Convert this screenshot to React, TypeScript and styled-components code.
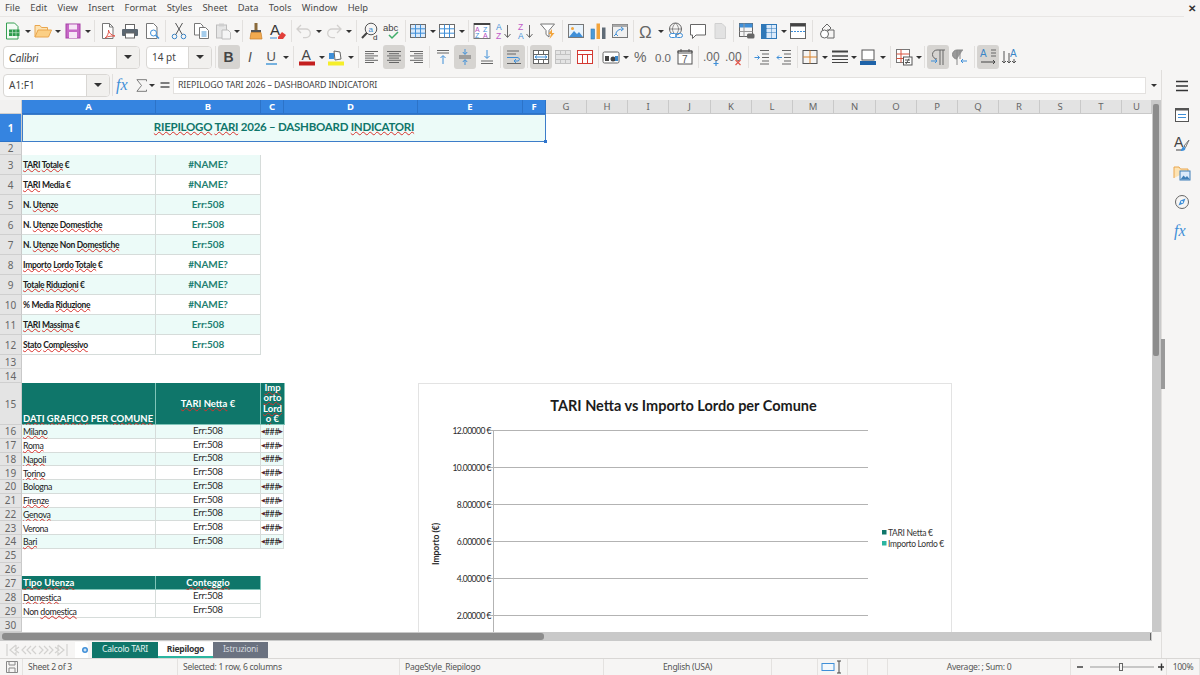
import React from "react";
import styled, { createGlobalStyle } from "styled-components";

const TEAL = "#0f766a";
const MINT = "#ecfbf8";
const BLUE = "#3584e0";
const LINE = "#d6dcda";
const UI = `"Noto Sans", "Open Sans", sans-serif`;
const SHEET = `Lato, "Liberation Sans", sans-serif`;

const COL_A = 134;
const COL_B = 105;
const COL_C = 23;

const Global = createGlobalStyle`
  html, body { margin: 0; padding: 0; background: #f6f5f4; }
  * { box-sizing: border-box; }
`;

const Page = styled.div`
  width: 1200px;
  height: 675px;
  overflow: hidden;
  display: flex;
  flex-direction: column;
  background: #f6f5f4;
  font-family: ${UI};
  color: #3d3d3d;
`;

const MenuRow = styled.div`
  height: 17px;
  display: flex;
`;

const MenuItems = styled.div`
  width: 1184px;
  display: flex;
  gap: 10.3px;
  padding-left: 5px;
  border-bottom: 1px solid #e8e6e4;
  font-size: 9.4px;
  line-height: 16px;
  color: #4a4a4a;
`;

const CloseDoc = styled.div`
  flex: 1;
  text-align: center;
  font-size: 10px;
  font-weight: 700;
  line-height: 16px;
  color: #333;
`;

const Bar = styled.div<{ $h: number; $pb?: number }>`
  height: ${(p) => p.$h}px;
  display: flex;
  align-items: center;
  padding-left: 2px;
  padding-bottom: ${(p) => p.$pb ?? 0}px;
`;

const Tool = styled.div<{ $on?: boolean; $w?: number }>`
  flex: none;
  width: ${(p) => p.$w ?? 22}px;
  height: 24px;
  display: flex;
  align-items: center;
  justify-content: center;
  border-radius: 3px;
  background: ${(p) => (p.$on ? "#d6d4d1" : "transparent")};
`;

const Drop = styled.div<{ $w?: number }>`
  flex: none;
  width: ${(p) => p.$w ?? 8}px;
  display: flex;
  justify-content: center;
  &::after {
    content: "";
    border: 3px solid transparent;
    border-top: 3.5px solid #333;
    border-bottom: 0;
  }
`;

const Sep = styled.div<{ $w?: number }>`
  flex: none;
  width: ${(p) => p.$w ?? 5}px;
  height: 22px;
  display: flex;
  justify-content: center;
  &::after {
    content: "";
    width: 1px;
    background: #e2e0de;
  }
`;

const Combo = styled.div<{ $w: number; $ml?: number }>`
  flex: none;
  width: ${(p) => p.$w}px;
  height: 23px;
  margin-left: ${(p) => p.$ml ?? 0}px;
  display: flex;
  background: #fff;
  border: 1px solid #d9d7d4;
  border-radius: 4px;
  overflow: hidden;
`;

const ComboText = styled.div<{ $italic?: boolean }>`
  flex: 1;
  padding-left: 5px;
  font-size: ${(p) => (p.$italic ? 11 : 10)}px;
  line-height: 21px;
  color: #444;
  font-family: ${(p) => (p.$italic ? SHEET : UI)};
  font-style: ${(p) => (p.$italic ? "italic" : "normal")};
`;

const ComboArrow = styled.div`
  flex: none;
  width: 23px;
  display: flex;
  align-items: center;
  justify-content: center;
  background: #f1f0ee;
  border-left: 1px solid #d9d7d4;
  &::after {
    content: "";
    border: 4px solid transparent;
    border-top: 4px solid #333;
    border-bottom: 0;
  }
`;

const Workspace = styled.div`
  height: 588px;
  display: flex;
`;

const MainColumn = styled.div`
  width: 1161px;
  display: flex;
  flex-direction: column;
`;

const FormulaBar = styled.div`
  height: 30px;
  flex: none;
  display: flex;
  align-items: center;
  padding-left: 3px;
`;

const FormulaInput = styled.div`
  flex: 1;
  height: 17px;
  margin-left: -1px;
  padding-left: 4px;
  background: #fff;
  border: 1px solid #e3e1df;
  font-size: 8.8px;
  letter-spacing: -0.1px;
  line-height: 15px;
  color: #444;
`;

const SheetRow = styled.div`
  height: 532px;
  flex: none;
  display: flex;
`;

const SheetPane = styled.div`
  position: relative;
  width: 1152px;
  overflow: hidden;
  background: #fff;
`;

const HeadRow = styled.div`
  height: 14px;
  display: flex;
`;

const Corner = styled.div`
  width: 22px;
  background: #f2f1f0;
  border-right: 1px solid #cfcfcf;
  border-bottom: 1px solid #cfcfcf;
`;

const ColHead = styled.div<{ $w: number; $on?: boolean }>`
  flex: none;
  width: ${(p) => p.$w}px;
  text-align: center;
  font-size: 9.5px;
  line-height: 14px;
  font-weight: ${(p) => (p.$on ? 700 : 400)};
  color: ${(p) => (p.$on ? "#fff" : "#666")};
  background: ${(p) => (p.$on ? BLUE : "#e3e3e3")};
  border-right: 1px solid ${(p) => (p.$on ? "#2c73c8" : "#c9c9c9")};
  border-bottom: 1px solid ${(p) => (p.$on ? "#2c73c8" : "#c9c9c9")};
`;

const Row = styled.div<{ $h: number }>`
  height: ${(p) => p.$h}px;
  display: flex;
`;

const RowHead = styled.div<{ $on?: boolean }>`
  flex: none;
  width: 22px;
  display: flex;
  align-items: center;
  justify-content: center;
  font-size: 10px;
  font-weight: ${(p) => (p.$on ? 700 : 400)};
  color: ${(p) => (p.$on ? "#fff" : "#666")};
  background: ${(p) => (p.$on ? BLUE : "#e4e4e4")};
  border-right: 1px solid #c9c9c9;
  border-bottom: 1px solid ${(p) => (p.$on ? "#2c73c8" : "#cfcfcf")};
`;

const TitleCell = styled.div`
  position: relative;
  width: 524px;
  text-align: center;
  background: ${MINT};
  border: 1.5px solid #3d7dc9;
  border-top-width: 1px;
  font-family: ${SHEET};
  font-size: 11.5px;
  letter-spacing: -0.25px;
  font-weight: 700;
  line-height: 24px;
  color: ${TEAL};
  &::after {
    content: "";
    position: absolute;
    right: -2px;
    bottom: -2px;
    width: 3.5px;
    height: 3.5px;
    background: #2f74cc;
  }
`;

const Cell = styled.div<{ $w: number; $mint?: boolean; $head?: boolean; $center?: boolean }>`
  flex: none;
  width: ${(p) => p.$w}px;
  display: flex;
  align-items: center;
  justify-content: ${(p) => (p.$center ? "center" : "flex-start")};
  padding: 0 1px;
  white-space: nowrap;
  font-family: ${SHEET};
  color: ${(p) => (p.$head ? "#fff" : "#222")};
  background: ${(p) => (p.$head ? TEAL : p.$mint ? MINT : "#fff")};
  border-right: 1px solid ${LINE};
  border-bottom: 1px solid ${LINE};
`;

const KpiLabel = styled(Cell)`
  font-size: 8.5px;
  letter-spacing: -0.3px;
  font-weight: 700;
  color: #1b1b1b;
`;

const KpiValue = styled(Cell)`
  font-size: 10px;
  letter-spacing: -0.1px;
  font-weight: 700;
  color: #1f7f72;
  padding-bottom: 2px;
`;

const HeadCell = styled(Cell)<{ $low?: boolean }>`
  font-size: 9.5px;
  font-weight: 700;
  align-items: ${(p) => (p.$low ? "flex-end" : "center")};
  border-color: #7fc4b8;
`;

const WrapHead = styled(HeadCell)`
  white-space: normal;
  text-align: center;
  line-height: 10.3px;
  padding: 0;
`;

const Name = styled(Cell)`
  font-size: 8.8px;
  letter-spacing: -0.35px;
  padding-top: 1px;
`;

const Err = styled(Cell)`
  font-size: 9.5px;
  letter-spacing: -0.2px;
  padding-bottom: 2px;
  color: #2a2a2a;
`;

const Hash = styled(Cell)`
  font-size: 9px;
  padding: 0;
  letter-spacing: -0.4px;
  overflow: hidden;
`;

const Tri = styled.span`
  font-size: 4.5px;
  color: #5a2323;
`;

const Sp = styled.span`
  text-decoration: underline wavy #d8322c 1px;
  text-underline-offset: 0;
  text-decoration-skip-ink: none;
`;

const ChartFrame = styled.div`
  position: absolute;
  left: 418px;
  top: 283px;
  width: 534px;
  height: 300px;
  background: #fff;
  border: 1px solid #e3e3e3;
`;

const VScroll = styled.div`
  position: relative;
  width: 9px;
  background: #c9c9c9;
  padding: 4px 1px 0;
`;

const VThumb = styled.div`
  width: 6px;
  height: 252px;
  border-radius: 2px;
  background: #8c8c8c;
`;

const SideGrip = styled.div`
  position: absolute;
  left: 9px;
  top: 239px;
  width: 5px;
  height: 50px;
  z-index: 2;
  background: #9a9a9a;
  border: solid #f6f5f4;
  border-width: 0 1px 0 0;
`;

const HScroll = styled.div`
  height: 9px;
  flex: none;
  width: 1152px;
  background: #c9c9c9;
  padding: 1px 0 1px 2px;
  display: flex;
  justify-content: space-between;
`;

const HThumb = styled.div`
  width: 542px;
  border-radius: 3px;
  background: #8c8c8c;
`;

const HEnd = styled.div`
  width: 1px;
  margin-right: 1px;
  background: #666;
`;

const TabRow = styled.div`
  height: 17px;
  flex: none;
  display: flex;
  align-items: flex-start;
  padding-top: 1px;
`;

const TabNav = styled.div`
  width: 75px;
  height: 16px;
  padding-left: 6px;
  display: flex;
  align-items: center;
`;

const NewTab = styled.div`
  width: 17px;
  height: 16px;
  display: flex;
  align-items: center;
`;

const Tab = styled.div<{ $w: number; $kind: "teal" | "white" | "grey" }>`
  width: ${(p) => p.$w}px;
  height: 16px;
  text-align: center;
  font-size: 8.6px;
  letter-spacing: -0.3px;
  line-height: 15px;
  font-weight: ${(p) => (p.$kind === "white" ? 700 : 400)};
  color: ${(p) => (p.$kind === "white" ? "#333" : p.$kind === "teal" ? "#e4f3f0" : "#d4d8de")};
  background: ${(p) => (p.$kind === "white" ? "#fff" : p.$kind === "teal" ? TEAL : "#6b7280")};
  border-bottom: ${(p) => (p.$kind === "white" ? "2px solid #2bb5a0" : "0")};
`;

const Sidebar = styled.div`
  flex: 1;
  display: flex;
  flex-direction: column;
  align-items: center;
  padding: 1px 0 0 1px;
  border-left: 1px solid #e0dedc;
`;

const SideTool = styled.div`
  height: 29px;
  display: flex;
  align-items: center;
  justify-content: center;
`;

const Status = styled.div`
  height: 17px;
  display: flex;
  border-top: 1px solid #d9d7d5;
  font-size: 8.6px;
  letter-spacing: -0.3px;
  line-height: 16px;
  color: #555;
`;

const StatusCell = styled.div<{ $w: number; $center?: boolean }>`
  flex: none;
  width: ${(p) => p.$w}px;
  display: flex;
  align-items: center;
  justify-content: ${(p) => (p.$center ? "center" : "flex-start")};
  padding-left: ${(p) => (p.$center ? 0 : 5)}px;
  border-right: 1px solid #e4e2e0;
  white-space: nowrap;
`;

const Ic = ({ s = 18, children }: { s?: number; children: React.ReactNode }) => (
  <svg width={s} height={s} viewBox="0 0 18 18" fill="none" overflow="visible">
    {children}
  </svg>
);

const T = (p: { x: number; y: number; s: number; c: string; b?: boolean; i?: boolean; children: string }) => (
  <text
    x={p.x}
    y={p.y}
    fontSize={p.s}
    fill={p.c}
    fontWeight={p.b ? 700 : 400}
    fontStyle={p.i ? "italic" : "normal"}
    fontFamily="'Liberation Sans', sans-serif"
  >
    {p.children}
  </text>
);

const GridIcon = ({ fill = "#dbeafa", line = "#3f8fd8", frame = "#6b6b6b" }) => (
  <Ic>
    <rect x="1.5" y="2.5" width="15" height="13" fill={fill} stroke={frame} />
    <path d="M6.5 2.500v13M11.5 2.500v13M1.5 6.800h15M1.5 11.200h15" stroke={line} />
  </Ic>
);

const AlignIcon = ({ rows }: { rows: [number, number][] }) => (
  <Ic>
    {rows.map(([a, b], i) => (
      <path key={i} d={`M${a} ${3.5 + i * 2.2}H${b}`} stroke="#666" />
    ))}
  </Ic>
);

const Lines = ({ d, c = "#666", w = 1 }: { d: string; c?: string; w?: number }) => (
  <path d={d} stroke={c} strokeWidth={w} />
);

const icons = {
  newDoc: (
    <Ic>
      <path d="M2.5 1h8L14 4.500V17H2.500z" fill="#f3fbf4" stroke="#36a052" />
      <rect x="5" y="7.5" width="10.5" height="6.5" fill="#2e9a4c" />
      <path d="M8.500 7.500v6.500M12 7.500v6.500M5 10.700h10.500" stroke="#bfe6ca" strokeWidth=".7" />
    </Ic>
  ),
  open: (
    <Ic>
      <path d="M1 15V3.500h5l1.500 2h6V8" fill="#fde3b3" stroke="#eaa64e" />
      <path d="M1 15l3-7h13.500l-3 7z" fill="#fbcf85" stroke="#eaa64e" />
    </Ic>
  ),
  save: (
    <Ic>
      <rect x="2" y="2" width="14" height="14" fill="#c768c7" stroke="#a643a6" />
      <rect x="5" y="2.5" width="8" height="5" fill="#f6e5f6" />
      <rect x="5" y="10" width="8" height="6" fill="#f6e5f6" />
    </Ic>
  ),
  pdf: (
    <Ic>
      <path d="M3.500 1.500h7L14 5v11.500H3.500z" fill="#fff" stroke="#777" />
      <path d="M10.500 1.500V5H14" stroke="#777" />
      <path d="M6 16c2-1 4-5 3.500-8 .5 3 2.500 5 6.500 6-3 0-7 0-10 2z" stroke="#e2574c" />
    </Ic>
  ),
  print: (
    <Ic>
      <rect x="4.5" y="2.5" width="9" height="5" fill="#fff" stroke="#666" />
      <rect x="1" y="7" width="16" height="7" rx="1" fill="#5b6670" />
      <rect x="4.5" y="11" width="9" height="5" fill="#fff" stroke="#666" />
    </Ic>
  ),
  preview: (
    <Ic>
      <path d="M3.500 1.500h7L14 5v11.500H3.500z" fill="#fff" stroke="#777" />
      <circle cx="10.5" cy="11" r="3" stroke="#3f8fd8" />
      <path d="M12.700 13.200L16 16.500" stroke="#3f8fd8" strokeWidth="1.5" />
    </Ic>
  ),
  cut: (
    <Ic>
      <circle cx="4.5" cy="14.5" r="2.3" stroke="#3a86c8" />
      <circle cx="13.5" cy="14.5" r="2.3" stroke="#3a86c8" />
      <path d="M5.800 12.500L12.500 1M12.200 12.500L5.500 1" stroke="#555" />
    </Ic>
  ),
  copy: (
    <Ic>
      <path d="M2.500 1.500h6L11 4v9H2.500z" fill="#fff" stroke="#777" />
      <path d="M7.500 5.500h6l3 3v8h-9z" fill="#fff" stroke="#777" />
      <path d="M9.500 10h5M9.500 12h5M9.500 14h5" stroke="#4a9ad8" />
    </Ic>
  ),
  paste: (
    <Ic>
      <rect x="2.5" y="3" width="10" height="13" fill="#e6e6e6" stroke="#bdbdbd" />
      <rect x="5" y="1.5" width="5" height="3" fill="#cfcfcf" />
      <path d="M8 8h6l2.500 2.500V17H8z" fill="#f5f5f5" stroke="#bdbdbd" />
    </Ic>
  ),
  clone: (
    <Ic>
      <rect x="7.5" y="1" width="3" height="7" fill="#8a6a3a" />
      <rect x="4" y="8" width="10" height="2.5" fill="#555" />
      <path d="M4 10.500h10l1 6.500H3z" fill="#f2aa4f" stroke="#c9802a" strokeWidth=".7" />
    </Ic>
  ),
  clear: (
    <Ic>
      <T x={1} y={13} s={15} c="#333">A</T>
      <path d="M9 15l4-5 4 3-3 4H9z" fill="#e23f3a" />
      <path d="M1 16h7" stroke="#3f8fd8" />
    </Ic>
  ),
  undo: (
    <Ic>
      <path d="M6 3L2 7l4 4M2 7h9a4.300 4.300 0 010 8.600H8" stroke="#d2d0ce" strokeWidth="1.3" />
    </Ic>
  ),
  redo: (
    <Ic>
      <path d="M12 3l4 4-4 4M16 7H7a4.300 4.300 0 000 8.600h3" stroke="#d2d0ce" strokeWidth="1.3" />
    </Ic>
  ),
  find: (
    <Ic>
      <circle cx="10" cy="7" r="5.8" stroke="#555" />
      <T x={7.5} y={9.5} s={8} c="#3a86c8">a</T>
      <T x={12} y={17.5} s={8} c="#333">d</T>
      <path d="M5.800 11L1 16" stroke="#444" strokeWidth="2" />
    </Ic>
  ),
  spell: (
    <Ic>
      <T x={0} y={9} s={9.5} c="#444">abc</T>
      <path d="M6 13l3 3 6-6" stroke="#3fae6a" strokeWidth="1.5" />
    </Ic>
  ),
  sort: (
    <Ic>
      <rect x="1" y="1.5" width="16" height="15" fill="#fff" stroke="#777" />
      <rect x="1" y="1" width="16" height="2" fill="#444" />
      <T x={2} y={10} s={7} c="#b44fc0">A</T>
      <T x={2} y={16} s={7} c="#3f8fd8">Z</T>
      <T x={10} y={10} s={7} c="#3f8fd8">Z</T>
      <T x={10} y={16} s={7} c="#b44fc0">A</T>
    </Ic>
  ),
  asc: (
    <Ic>
      <T x={1} y={8} s={8.5} c="#3f8fd8">A</T>
      <T x={1} y={16.5} s={8.5} c="#c05cc8">Z</T>
      <path d="M12.500 3v12M9.500 12l3 3.500 3-3.500" stroke="#666" />
    </Ic>
  ),
  desc: (
    <Ic>
      <T x={1} y={8} s={8.5} c="#c05cc8">Z</T>
      <T x={1} y={16.5} s={8.5} c="#3f8fd8">A</T>
      <path d="M12.500 3v12M9.500 12l3 3.500 3-3.500" stroke="#666" />
    </Ic>
  ),
  filter: (
    <Ic>
      <path d="M1.500 2h14L10 8.500V15l-3-2.500v-4z" fill="#fff" stroke="#777" />
      <path d="M13 7l-3.500 5H12l-1.500 5 5-6H13z" fill="#f2a43c" />
    </Ic>
  ),
  image: (
    <Ic>
      <rect x="1.5" y="2.5" width="15" height="13" fill="#e8f3fc" stroke="#777" />
      <circle cx="5.5" cy="6.5" r="1.5" fill="#f2a43c" />
      <path d="M2 15l5-6 3 3 2-2 4 5z" fill="#3f8fd8" />
    </Ic>
  ),
  chart: (
    <Ic>
      <rect x="2" y="7" width="3.5" height="10" fill="#4a9ad8" stroke="#2f78b8" strokeWidth=".6" />
      <rect x="7.5" y="1.5" width="3.5" height="15.5" fill="#f2a43c" />
      <rect x="13" y="5.5" width="3.5" height="11.5" fill="#5f6b76" />
    </Ic>
  ),
  pivot: (
    <Ic>
      <rect x="1.5" y="2.5" width="15" height="13" fill="#f0f0f0" stroke="#777" />
      <rect x="1.5" y="2.5" width="15" height="2.5" fill="#aaa" />
      <path d="M5 12c0-3 3-5 7-5M10 5l2.500 2-2.500 2M7 14l-2-2-2 2" stroke="#3f8fd8" />
    </Ic>
  ),
  omega: (
    <Ic>
      <T x={2} y={15.5} s={17} c="#666">Ω</T>
    </Ic>
  ),
  link: (
    <Ic>
      <circle cx="8.5" cy="7" r="6" stroke="#666" />
      <path d="M2.500 7h12M8.500 1c-4 4-4 8 0 12M8.500 1c4 4 4 8 0 12" stroke="#666" strokeWidth=".7" />
      <rect x="2.5" y="11.5" width="7" height="4" rx="2" fill="#fff" stroke="#3f8fd8" />
      <rect x="8.5" y="11.5" width="7" height="4" rx="2" stroke="#3f8fd8" />
    </Ic>
  ),
  comment: (
    <Ic>
      <path d="M1.500 2.500h15V13H7l-3.500 3.500V13h-2z" fill="#fff" stroke="#666" />
    </Ic>
  ),
  header: (
    <Ic>
      <path d="M4 1.500h7L14.500 5v11.500H4z" fill="#e2e2e2" stroke="#d0d0d0" />
    </Ic>
  ),
  freeze: (
    <Ic>
      <rect x="1.5" y="1.5" width="13" height="13" fill="#f6f6f6" stroke="#666" />
      <rect x="1.5" y="1.5" width="13" height="4" fill="#3f8fd8" />
      <path d="M1.500 9.500h13M6 1.500v13" stroke="#999" />
      <rect x="9" y="11.5" width="7.5" height="5" rx="1.5" fill="#666" />
    </Ic>
  ),
  colsplit: (
    <Ic>
      <rect x="1.5" y="2.5" width="15" height="14" fill="#dbeafa" stroke="#2f78b8" />
      <rect x="1.5" y="2.5" width="5" height="14" fill="#2f78b8" />
      <path d="M6.500 6.500h10M6.500 10.500h10M11.500 2.500v14M1.500 6.500h5M1.500 10.500h5" stroke="#2f78b8" strokeDasharray="1 1" />
    </Ic>
  ),
  pagebreak: (
    <Ic>
      <rect x="1.5" y="1.5" width="15" height="15" fill="#fff" stroke="#666" />
      <rect x="1.5" y="1.5" width="15" height="3" fill="#444" />
      <path d="M2 9.500h14" stroke="#3f8fd8" strokeDasharray="2 1" />
    </Ic>
  ),
  shapes: (
    <Ic>
      <path d="M4 7l5-5 4 4-5 5z" stroke="#666" />
      <circle cx="6.5" cy="12" r="4" fill="#fff" stroke="#666" />
      <path d="M9 8h7v8H9" stroke="#666" />
    </Ic>
  ),
  bold: (
    <Ic>
      <T x={3.5} y={14} s={14} c="#444" b>B</T>
    </Ic>
  ),
  italic: (
    <Ic>
      <T x={6} y={14} s={14} c="#555" i>I</T>
    </Ic>
  ),
  underline: (
    <Ic>
      <T x={3.5} y={13} s={13} c="#555">U</T>
      <path d="M3 16h11" stroke="#4a9ad8" strokeWidth="1.5" />
    </Ic>
  ),
  fontColor: (
    <Ic>
      <T x={3.5} y={12} s={14} c="#444">A</T>
      <rect x="1" y="13.5" width="16" height="4" fill="#c41f1f" />
    </Ic>
  ),
  bgColor: (
    <Ic>
      <rect x="1" y="13.5" width="16" height="4" fill="#f5ee2a" />
      <path d="M2 5h5v6H2z" fill="#3f8fd8" />
      <path d="M7 3l6 1 1 7-6 1z" fill="#fff" stroke="#666" />
    </Ic>
  ),
  left: <AlignIcon rows={[[2, 15], [2, 11], [2, 15], [2, 11], [2, 15], [2, 11]]} />,
  center: <AlignIcon rows={[[2, 16], [4, 14], [2, 16], [4, 14], [2, 16], [4, 14]]} />,
  right: <AlignIcon rows={[[3, 16], [7, 16], [3, 16], [7, 16], [3, 16], [7, 16]]} />,
  top: (
    <Ic>
      <Lines d="M3 2.500h12M3 5h12" />
      <Lines d="M9 16V8M6.500 10L9 7.500l2.500 2.500" c="#3f8fd8" />
    </Ic>
  ),
  middle: (
    <Ic>
      <Lines d="M3 8h12M3 10h12" />
      <Lines d="M9 1v5M6.800 4L9 6.500 11.200 4M9 17v-5M6.800 14L9 11.500l2.200 2.500" c="#3f8fd8" />
    </Ic>
  ),
  bottom: (
    <Ic>
      <Lines d="M3 13h12M3 15.500h12" />
      <Lines d="M9 2v8M6.500 8L9 10.500 11.500 8" c="#3f8fd8" />
    </Ic>
  ),
  wrap: (
    <Ic>
      <Lines d="M2 3h12M2 6h9M2 15.500h14" />
      <Lines d="M2 9.500h10c3 0 3 3 1 3.500H9M11 11l-2 2 2 2" c="#3f8fd8" />
    </Ic>
  ),
  merge: (
    <Ic>
      <rect x="1.5" y="2.5" width="15" height="13" fill="#fff" stroke="#666" />
      <path d="M1.500 6.500h15M1.500 11.500h15M6.500 2.500v4M11.500 2.500v4M6.500 11.500v4M11.500 11.500v4" stroke="#666" />
      <path d="M3 9h12M5 7.500L3 9l2 1.500M13 7.500L15 9l-2 1.500" stroke="#3f8fd8" />
    </Ic>
  ),
  merged: (
    <Ic>
      <rect x="1.5" y="2.5" width="15" height="13" fill="#e4e4e4" stroke="#c2c2c2" />
      <path d="M1.500 6.500h15M1.500 11.500h15M6.500 2.500v4M11.500 2.500v4M6.500 11.500v4M11.500 11.500v4" stroke="#c2c2c2" />
    </Ic>
  ),
  split: (
    <Ic>
      <rect x="1.5" y="2.5" width="15" height="13" fill="#fff" stroke="#d43a33" />
      <path d="M1.500 6.500h15M6.500 6.500v9M11.500 6.500v9" stroke="#d43a33" />
    </Ic>
  ),
  currency: (
    <Ic>
      <rect x="1" y="4" width="16" height="11" rx="1.5" fill="#fff" stroke="#666" />
      <rect x="3" y="8" width="4" height="5" fill="#444" />
      <circle cx="11" cy="11" r="2.5" fill="#444" />
      <rect x="13" y="8" width="3" height="5" fill="#3a86c8" />
    </Ic>
  ),
  percent: (
    <Ic>
      <T x={2} y={14} s={14} c="#666">%</T>
    </Ic>
  ),
  number: (
    <Ic>
      <T x={1} y={14} s={11.5} c="#666">0.0</T>
    </Ic>
  ),
  date: (
    <Ic>
      <rect x="2" y="3" width="14" height="13" fill="#fff" stroke="#555" />
      <path d="M2 3h14v2H2zM5 1v3M13 1v3" stroke="#555" />
      <T x={6} y={14.5} s={10} c="#555">7</T>
    </Ic>
  ),
  addDec: (
    <Ic>
      <T x={0} y={13} s={12} c="#666">.00</T>
      <path d="M13 13v5M10.500 15.500h5" stroke="#3f8fd8" strokeWidth="1.2" />
    </Ic>
  ),
  delDec: (
    <Ic>
      <T x={0} y={13} s={12} c="#666">.00</T>
      <path d="M10.500 12l5 5M15.500 12l-5 5" stroke="#e2574c" strokeWidth="1.2" />
    </Ic>
  ),
  indent: (
    <Ic>
      <Lines d="M7 2.500h9M9 6h7M9 9.500h7M9 13h7M7 16h9" />
      <Lines d="M1.500 9.500h5M4.500 7.500l2 2-2 2" c="#3f8fd8" />
    </Ic>
  ),
  outdent: (
    <Ic>
      <Lines d="M7 2.500h9M9 6h7M9 9.500h7M9 13h7M7 16h9" />
      <Lines d="M7 9.500H2M4 7.500l-2 2 2 2" c="#3f8fd8" />
    </Ic>
  ),
  borders: (
    <Ic>
      <rect x="2" y="2.5" width="14" height="13" stroke="#555" />
      <path d="M9 2.500v13M2 9h14" stroke="#d9822b" />
    </Ic>
  ),
  borderStyle: (
    <Ic>
      <path d="M1 3.500h16" stroke="#444" strokeWidth="2" />
      <path d="M1 8h16" stroke="#444" strokeWidth="1.5" />
      <path d="M1 11.500h16M1 14.500h16" stroke="#444" />
    </Ic>
  ),
  borderColor: (
    <Ic>
      <rect x="3" y="2" width="12" height="10" fill="#fff" stroke="#555" />
      <rect x="1" y="13" width="16" height="4" fill="#1f63a8" />
    </Ic>
  ),
  conditional: (
    <Ic>
      <rect x="1.5" y="1.5" width="13" height="13" fill="#fff" stroke="#777" />
      <path d="M1.500 6h13M1.500 10.500h13M6 1.500v13" stroke="#d9533f" />
      <rect x="8.5" y="9" width="8.5" height="8" fill="#fff" stroke="#555" />
      <path d="M10 12h5M10 14.500h5M14 10.500l-3 5.500" stroke="#555" />
    </Ic>
  ),
  ltr: (
    <Ic>
      <path d="M8 11a4.500 4.500 0 010-9h8M11 2v15M14 2v15" stroke="#666" />
      <path d="M2 13h6M6 11l2 2-2 2" stroke="#3f8fd8" />
    </Ic>
  ),
  rtl: (
    <Ic>
      <path d="M6 11a4.500 4.500 0 010-9h6M6 2v15M9 2v9" stroke="#888" fill="#999" />
      <path d="M16 13h-6M12 11l-2 2 2 2" stroke="#3f8fd8" />
    </Ic>
  ),
  horizontal: (
    <Ic>
      <T x={1} y={9} s={10} c="#3a86c8">A</T>
      <path d="M12 2h5M12 5h5M12 8h5" stroke="#666" />
      <path d="M2 14h14M14 12l2 2-2 2" stroke="#444" />
    </Ic>
  ),
  vertical: (
    <Ic>
      <T x={9} y={9} s={10} c="#3a86c8">A</T>
      <path d="M3 3v12M1 13l2 2 2-2M8 5v10M6 13l2 2 2-2M13 11v4M11 13l2 2 2-2" stroke="#555" />
    </Ic>
  ),
};

const FxMark = ({ c = "#3f8fd8" }: { c?: string }) => (
  <Ic>
    <text x="1" y="14" fontSize="16" fontStyle="italic" fontFamily="'Liberation Serif', serif" fill={c}>
      fx
    </text>
  </Ic>
);

const side = {
  menu: (
    <Ic>
      <path d="M3 4.500h12M3 9h12M3 13.500h12" stroke="#333" strokeWidth="1.4" />
    </Ic>
  ),
  props: (
    <Ic>
      <rect x="2.5" y="2.5" width="13" height="13" fill="#fff" stroke="#555" />
      <rect x="2.5" y="2.5" width="13" height="2" fill="#555" />
      <path d="M5 8.500h8M5 11.500h8" stroke="#3f8fd8" />
    </Ic>
  ),
  styles: (
    <Ic>
      <T x={1} y={12} s={14} c="#444">A</T>
      <path d="M3 15h6" stroke="#444" />
      <path d="M16 5l-5 6 1.500 1.500z" stroke="#777" />
      <path d="M10.500 11.500c-2 1-2 4-3 4.500 3 .5 5-1 5-3z" fill="#3f8fd8" />
    </Ic>
  ),
  gallery: (
    <Ic>
      <path d="M1 14V3h5l1.500 2H15v2" fill="#fde3b3" stroke="#eaa64e" />
      <rect x="7" y="7" width="10" height="9" fill="#dbeafa" stroke="#3f7fb8" />
      <path d="M7.500 15.500l3-4 2 2 1.500-1.500 3 3.500z" fill="#3f7fb8" />
    </Ic>
  ),
  nav: (
    <Ic>
      <circle cx="9" cy="9" r="6.5" stroke="#666" />
      <path d="M12.500 5.500l-2 5-5 2 2-5z" fill="#3f8fd8" />
      <circle cx="9" cy="9" r="1" fill="#fff" />
    </Ic>
  ),
};

const columns = [
  ["A", COL_A], ["B", COL_B], ["C", COL_C], ["D", 134], ["E", 105], ["F", 23],
  ["G", 41], ["H", 41], ["I", 41], ["J", 42], ["K", 41], ["L", 41], ["M", 41],
  ["N", 42], ["O", 41], ["P", 41], ["Q", 41], ["R", 41], ["S", 41], ["T", 41], ["U", 30],
] as [string, number][];

const kpis: [React.ReactNode, string][] = [
  [<><Sp>TARI</Sp> <Sp>Totale</Sp> €</>, "#NAME?"],
  [<><Sp>TARI</Sp> Media €</>, "#NAME?"],
  [<>N. <Sp>Utenze</Sp></>, "Err:508"],
  [<>N. <Sp>Utenze</Sp> <Sp>Domestiche</Sp></>, "Err:508"],
  [<>N. <Sp>Utenze</Sp> Non <Sp>Domestiche</Sp></>, "Err:508"],
  [<><Sp>Importo</Sp> <Sp>Lordo</Sp> <Sp>Totale</Sp> €</>, "#NAME?"],
  [<><Sp>Totale</Sp> <Sp>Riduzioni</Sp> €</>, "#NAME?"],
  [<>% Media <Sp>Riduzione</Sp></>, "#NAME?"],
  [<><Sp>TARI</Sp> <Sp>Massima</Sp> €</>, "Err:508"],
  [<><Sp>Stato</Sp> <Sp>Complessivo</Sp></>, "Err:508"],
];

const comuni: [string, boolean][] = [
  ["Milano", true], ["Roma", true], ["Napoli", true], ["Torino", true], ["Bologna", false],
  ["Firenze", true], ["Genova", true], ["Verona", false], ["Bari", true],
];

const TICKS = ["12.00000 €", "10.00000 €", "8.00000 €", "6.00000 €", "4.00000 €", "2.00000 €"];

function Chart() {
  return (
    <ChartFrame>
      <svg width="532" height="298" fontFamily="Lato, sans-serif">
        <text x="264.5" y="27" textAnchor="middle" fontSize="14.5" fontWeight="700" fill="#1c1c1c">
          TARI Netta vs Importo Lordo per Comune
        </text>
        <path d="M74.500 46V298" stroke="#b3b3b3" />
        {TICKS.map((t, i) => (
          <g key={t}>
            <path d={`M71 ${46.5 + i * 37}H449`} stroke="#b3b3b3" />
            <text x="72" y={49.5 + i * 37} textAnchor="end" fontSize="8.5" letterSpacing="-0.5" fill="#2a2a2a">
              {t}
            </text>
          </g>
        ))}
        <text x="0" y="0" transform="translate(20 160) rotate(-90)" textAnchor="middle" fontSize="8.5" fontWeight="700" fill="#2a2a2a">
          Importo (€)
        </text>
        <rect x="463" y="146" width="4.5" height="4.5" fill={TEAL} />
        <rect x="463" y="157" width="4.5" height="4.5" fill="#2bb5a0" />
        <text x="469" y="151.5" fontSize="8.5" letterSpacing="-0.3" fill="#333">TARI Netta €</text>
        <text x="469" y="162.5" fontSize="8.5" letterSpacing="-0.3" fill="#333">Importo Lordo €</text>
      </svg>
    </ChartFrame>
  );
}

export default function App() {
  return (
    <Page>
      <Global />
      <MenuRow>
        <MenuItems>
          {["File", "Edit", "View", "Insert", "Format", "Styles", "Sheet", "Data", "Tools", "Window", "Help"].map((m) => (
            <span key={m}>{m}</span>
          ))}
        </MenuItems>
        <CloseDoc>✕</CloseDoc>
      </MenuRow>

      <Bar $h={28}>
        <Tool>{icons.newDoc}</Tool><Drop />
        <Tool>{icons.open}</Tool><Drop />
        <Tool>{icons.save}</Tool><Drop />
        <Sep />
        <Tool>{icons.pdf}</Tool><Tool>{icons.print}</Tool><Tool>{icons.preview}</Tool>
        <Sep />
        <Tool>{icons.cut}</Tool><Tool>{icons.copy}</Tool><Tool>{icons.paste}</Tool><Drop $w={6} />
        <Sep />
        <Tool>{icons.clone}</Tool><Tool>{icons.clear}</Tool>
        <Sep $w={4} />
        <Tool>{icons.undo}</Tool><Drop /><Tool>{icons.redo}</Tool><Drop />
        <Sep $w={6} />
        <Tool>{icons.find}</Tool><Tool>{icons.spell}</Tool>
        <Sep $w={4} />
        <Tool><GridIcon /></Tool><Drop $w={7} />
        <Tool><GridIcon fill="#fff" /></Tool><Drop />
        <Sep />
        <Tool>{icons.sort}</Tool><Tool>{icons.asc}</Tool><Tool>{icons.desc}</Tool><Tool>{icons.filter}</Tool>
        <Sep $w={6} />
        <Tool>{icons.image}</Tool><Tool>{icons.chart}</Tool><Tool>{icons.pivot}</Tool>
        <Sep $w={4} />
        <Tool>{icons.omega}</Tool><Drop />
        <Tool>{icons.link}</Tool><Tool>{icons.comment}</Tool><Tool>{icons.header}</Tool>
        <Sep />
        <Tool>{icons.freeze}</Tool><Tool>{icons.colsplit}</Tool><Drop $w={7} />
        <Tool>{icons.pagebreak}</Tool>
        <Sep $w={7} />
        <Tool>{icons.shapes}</Tool>
      </Bar>

      <Bar $h={25} $pb={1}>
        <Combo $w={137} $ml={1}><ComboText $italic>Calibri</ComboText><ComboArrow /></Combo>
        <Combo $w={66} $ml={6}><ComboText>14 pt</ComboText><ComboArrow /></Combo>
        <Sep $w={6} />
        <Tool $on>{icons.bold}</Tool><Tool>{icons.italic}</Tool><Tool $w={20}>{icons.underline}</Tool><Drop />
        <Sep $w={6} />
        <Tool>{icons.fontColor}</Tool><Drop $w={7} />
        <Tool>{icons.bgColor}</Tool><Drop />
        <Sep $w={6} />
        <Tool>{icons.left}</Tool><Tool $on>{icons.center}</Tool><Tool>{icons.right}</Tool>
        <Sep $w={5} />
        <Tool>{icons.top}</Tool><Tool $on>{icons.middle}</Tool><Tool>{icons.bottom}</Tool>
        <Sep />
        <Tool $on>{icons.wrap}</Tool>
        <Sep />
        <Tool $on>{icons.merge}</Tool><Tool>{icons.merged}</Tool><Tool>{icons.split}</Tool>
        <Sep $w={4} />
        <Tool>{icons.currency}</Tool><Drop />
        <Tool>{icons.percent}</Tool><Tool>{icons.number}</Tool><Tool>{icons.date}</Tool>
        <Sep />
        <Tool>{icons.addDec}</Tool><Tool>{icons.delDec}</Tool>
        <Sep $w={6} />
        <Tool>{icons.indent}</Tool><Tool>{icons.outdent}</Tool>
        <Sep $w={4} />
        <Tool>{icons.borders}</Tool><Drop />
        <Tool>{icons.borderStyle}</Tool><Drop $w={6} />
        <Tool>{icons.borderColor}</Tool><Drop />
        <Sep $w={6} />
        <Tool>{icons.conditional}</Tool><Drop $w={7} />
        <Sep />
        <Tool $on>{icons.ltr}</Tool><Tool>{icons.rtl}</Tool>
        <Sep $w={6} />
        <Tool $on>{icons.horizontal}</Tool><Tool>{icons.vertical}</Tool>
      </Bar>

      <Workspace>
        <MainColumn>
          <FormulaBar>
            <Combo $w={107}><ComboText>A1:F1</ComboText><ComboArrow /></Combo>
            <Sep $w={4} />
            <Tool $w={20}><FxMark /></Tool>
            <Tool $w={14}>
              <Ic s={15}><path d="M15 4V2H3.500L9 9l-5.500 7H15v-2" stroke="#666" /></Ic>
            </Tool>
            <Drop />
            <Tool $w={18}><Ic><path d="M4.500 7h9M4.500 11h9" stroke="#555" strokeWidth="1.5" /></Ic></Tool>
            <FormulaInput>RIEPILOGO TARI 2026 – DASHBOARD INDICATORI</FormulaInput>
            <Tool $w={15}><Drop /></Tool>
          </FormulaBar>

          <SheetRow>
            <SheetPane>
              <HeadRow>
                <Corner />
                {columns.map(([c, w], i) => (
                  <ColHead key={c} $w={w} $on={i < 6}>{c}</ColHead>
                ))}
              </HeadRow>

              <Row $h={28}>
                <RowHead $on>1</RowHead>
                <TitleCell>
                  <Sp>RIEPILOGO</Sp> <Sp>TARI</Sp> 2026 – DASHBOARD <Sp>INDICATORI</Sp>
                </TitleCell>
              </Row>
              <Row $h={13}><RowHead>2</RowHead></Row>

              {kpis.map(([label, value], i) => (
                <Row $h={20} key={i}>
                  <RowHead>{i + 3}</RowHead>
                  <KpiLabel $w={COL_A} $mint={i % 2 === 0}><span>{label}</span></KpiLabel>
                  <KpiValue $w={COL_B} $center $mint={i % 2 === 0}>{value}</KpiValue>
                </Row>
              ))}

              <Row $h={14}><RowHead>13</RowHead></Row>
              <Row $h={14}><RowHead>14</RowHead></Row>
              <Row $h={42}>
                <RowHead>15</RowHead>
                <HeadCell $w={COL_A} $head $low>
                  <span><Sp>DATI</Sp> <Sp>GRAFICO</Sp> PER <Sp>COMUNE</Sp></span>
                </HeadCell>
                <HeadCell $w={COL_B} $head $center><span><Sp>TARI</Sp> <Sp>Netta</Sp> €</span></HeadCell>
                <WrapHead $w={COL_C + 1} $head $center>
                  <span><Sp>Imp</Sp><br /><Sp>orto</Sp><br /><Sp>Lord</Sp><br /><Sp>o</Sp> €</span>
                </WrapHead>
              </Row>

              {comuni.map(([name, wrong], i) => (
                <Row $h={13.75} key={name}>
                  <RowHead>{i + 16}</RowHead>
                  <Name $w={COL_A} $mint={i % 2 === 0}><span>{wrong ? <Sp>{name}</Sp> : name}</span></Name>
                  <Err $w={COL_B} $center $mint={i % 2 === 0}>Err:508</Err>
                  <Hash $w={COL_C} $center $mint={i % 2 === 0}><Tri>◀</Tri>###<Tri>▶</Tri></Hash>
                </Row>
              ))}

              <Row $h={14}><RowHead>25</RowHead></Row>
              <Row $h={13.25}><RowHead>26</RowHead></Row>
              <Row $h={14}>
                <RowHead>27</RowHead>
                <HeadCell $w={COL_A} $head><span><Sp>Tipo</Sp> <Sp>Utenza</Sp></span></HeadCell>
                <HeadCell $w={COL_B} $head $center><Sp>Conteggio</Sp></HeadCell>
              </Row>
              <Row $h={14}>
                <RowHead>28</RowHead>
                <Name $w={COL_A}><span><Sp>Domestica</Sp></span></Name>
                <Err $w={COL_B} $center>Err:508</Err>
              </Row>
              <Row $h={14}>
                <RowHead>29</RowHead>
                <Name $w={COL_A}><span>Non <Sp>domestica</Sp></span></Name>
                <Err $w={COL_B} $center>Err:508</Err>
              </Row>
              <Row $h={14}><RowHead>30</RowHead></Row>

              <Chart />
            </SheetPane>
            <VScroll>
              <VThumb />
              <SideGrip />
            </VScroll>
          </SheetRow>

          <HScroll><HThumb /><HEnd /></HScroll>

          <TabRow>
            <TabNav>
              <svg width="62" height="14" viewBox="0 0 62 14" fill="none" stroke="#d3d2d0" strokeWidth="1.2">
                <path d="M1 1v12M10 2L4 7l6 5V2M13 4l-4 3 4 3" />
                <path d="M20 3l-4 4 4 4M25 3l-4 4 4 4M30 3l-4 4 4 4M33 3l4 4-4 4M38 3l4 4-4 4M43 3l4 4-4 4" />
                <path d="M49 4l4 3-4 3M52 2l6 5-6 5V2M61 1v12" />
              </svg>
            </TabNav>
            <NewTab>
              <svg width="15" height="16" viewBox="0 0 15 16">
                <path d="M0 0h10l3 3v13H0z" fill="#fff" />
                <circle cx="10" cy="8" r="3" fill="#3f8fd8" />
                <path d="M8.500 8h3M10 6.500v3" stroke="#fff" />
              </svg>
            </NewTab>
            <Tab $w={66} $kind="teal">Calcolo TARI</Tab>
            <Tab $w={55} $kind="white">Riepilogo</Tab>
            <Tab $w={55} $kind="grey">Istruzioni</Tab>
          </TabRow>
        </MainColumn>

        <Sidebar>
          <SideTool>{side.menu}</SideTool>
          <SideTool>{side.props}</SideTool>
          <SideTool>{side.styles}</SideTool>
          <SideTool>{side.gallery}</SideTool>
          <SideTool>{side.nav}</SideTool>
          <SideTool><FxMark /></SideTool>
        </Sidebar>
      </Workspace>

      <Status>
        <StatusCell $w={23}>
          <svg width="14" height="14" viewBox="0 0 14 14" fill="none" stroke="#888">
            <path d="M1.500 1.500h11v11h-11zM4 1.500V5h6V1.500M4 12.500V8h6v4.500" />
          </svg>
        </StatusCell>
        <StatusCell $w={155}>Sheet 2 of 3</StatusCell>
        <StatusCell $w={222}>Selected: 1 row, 6 columns</StatusCell>
        <StatusCell $w={204}>PageStyle_Riepilogo</StatusCell>
        <StatusCell $w={168} $center>English (USA)</StatusCell>
        <StatusCell $w={46} />
        <StatusCell $w={30} $center>
          <svg width="24" height="14" viewBox="0 0 24 14" fill="none">
            <rect x="1" y="3.5" width="12" height="7" fill="#f2f8fd" stroke="#3f8fd8" />
            <path d="M18 1v12M16 1h4M16 13h4" stroke="#444" />
          </svg>
        </StatusCell>
        <StatusCell $w={20} />
        <StatusCell $w={20} />
        <StatusCell $w={183} $center>Average: ; Sum: 0</StatusCell>
        <StatusCell $w={96} $center>
          <svg width="90" height="14" viewBox="0 0 90 14" fill="none">
            <path d="M3 7h6" stroke="#333" strokeWidth="1.4" />
            <path d="M16 7h64" stroke="#999" />
            <rect x="45.5" y="3.5" width="3" height="7" fill="#f6f5f4" stroke="#666" />
            <path d="M84 7h7M87.500 3.500v7" stroke="#333" strokeWidth="1.4" />
          </svg>
        </StatusCell>
        <StatusCell $w={33} $center>100%</StatusCell>
      </Status>
    </Page>
  );
}
